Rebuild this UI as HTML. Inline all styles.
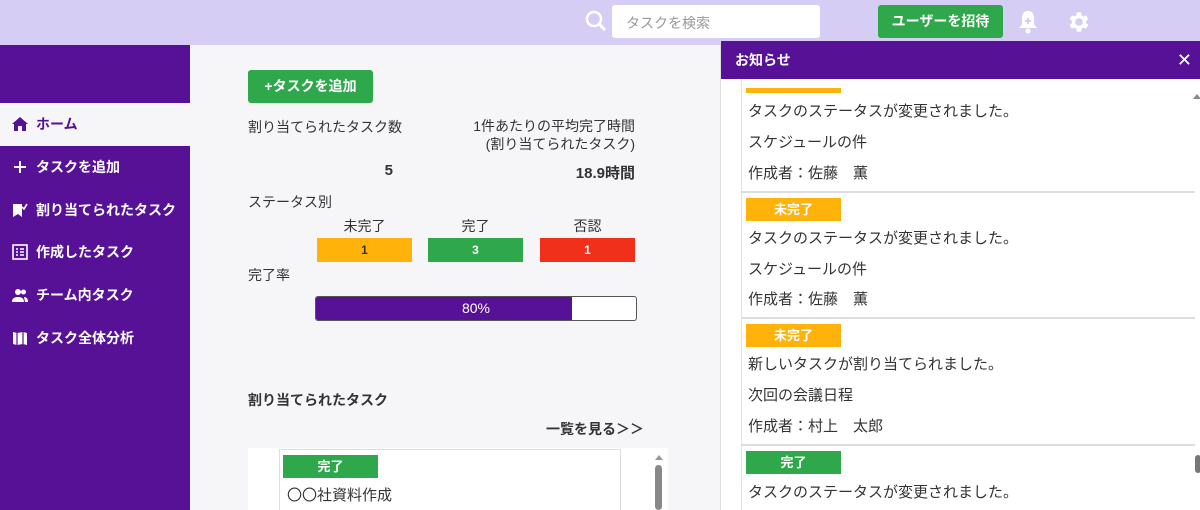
<!DOCTYPE html>
<html><head><meta charset="utf-8"><style>
*{margin:0;padding:0;box-sizing:border-box}
body{width:1200px;height:510px;overflow:hidden;position:relative;background:#f6f6f8;font-family:"Liberation Sans","Noto Sans CJK JP",sans-serif;color:#333}
.a{position:absolute}
.hdr{left:0;top:0;width:1200px;height:45px;background:#d6cdf5}
.side{left:0;top:45px;width:190px;height:465px;background:#561196}
.mi{position:absolute;left:12px;color:#fff;font-weight:bold;font-size:14px;display:flex;align-items:center;gap:8px;height:20px}
.mi svg{width:16px;height:16px}
.b{font-weight:bold}
.t14{font-size:14px}
.box{height:24px;font-size:12px;font-weight:bold;text-align:center;line-height:24px}
.badge{position:absolute;left:25px;width:95px;height:23px;color:#fff;font-weight:bold;font-size:13px;text-align:center;line-height:23px}
.nt{position:absolute;left:27px;font-size:15px;color:#333}
.sep{position:absolute;left:20px;width:454px;height:2px;background:#ddd}
</style></head><body>
<div class="a hdr"></div>
<svg class="a" style="left:584px;top:9px" width="24" height="24" viewBox="0 0 24 24"><circle cx="10" cy="10" r="7" fill="none" stroke="#fff" stroke-width="2.5"/><path d="M15 15l6 6" stroke="#fff" stroke-width="3"/></svg>
<div class="a" style="left:612px;top:5px;width:208px;height:33px;background:#fff;border-radius:3px;font-size:14px;color:#999;padding:8px 0 0 14px">タスクを検索</div>
<div class="a" style="left:878px;top:5px;width:125px;height:33px;background:#2ea84b;border-radius:3px;color:#fff;font-weight:bold;font-size:14px;text-align:center;line-height:33px">ユーザーを招待</div>
<svg class="a" style="left:1016px;top:9px" width="24" height="26" viewBox="0 0 24 26"><path d="M12 2c-4 0-6 3-6 7v6l-3 4h18l-3-4V9c0-4-2-7-6-7z" fill="#fff"/><circle cx="12" cy="22" r="2.5" fill="#fff"/><path d="M12 9v6M9 12h6" stroke="#d6cdf5" stroke-width="2"/></svg>
<svg class="a" style="left:1065px;top:9px" width="26" height="26" viewBox="0 0 24 24"><path fill="#fff" d="M19.4 13a7.5 7.5 0 000-2l2.1-1.6-2-3.5-2.5 1a7 7 0 00-1.7-1L14.9 3h-4l-.4 2.9a7 7 0 00-1.7 1l-2.5-1-2 3.5L6.4 11a7.5 7.5 0 000 2l-2.1 1.6 2 3.5 2.5-1a7 7 0 001.7 1l.4 2.9h4l.4-2.9a7 7 0 001.7-1l2.5 1 2-3.5zM12.9 15.5a3.5 3.5 0 110-7 3.5 3.5 0 010 7z"/></svg>

<div class="a side"></div>
<div class="a" style="left:0;top:103px;width:190px;height:43px;background:#f6f6f8"></div>
<div class="mi" style="top:114px;color:#561196"><svg viewBox="0 0 16 16"><path d="M8 1L0 8h2v7h4v-5h4v5h4V8h2z" fill="#561196"/></svg>ホーム</div>
<div class="mi" style="top:157px"><svg viewBox="0 0 16 16"><path d="M8 2v12M2 8h12" stroke="#fff" stroke-width="2"/></svg>タスクを追加</div>
<div class="mi" style="top:200px"><svg viewBox="0 0 16 16"><path d="M1 2h9v13l-4-3-5 3z" fill="#fff"/><path d="M10 5l2 2 3-5" stroke="#fff" stroke-width="1.6" fill="none"/></svg>割り当てられたタスク</div>
<div class="mi" style="top:242px"><svg viewBox="0 0 16 16"><rect x="1" y="1" width="14" height="14" fill="none" stroke="#fff" stroke-width="1.6"/><path d="M4 5h2M8 5h4M4 8h2M8 8h4M4 11h2M8 11h4" stroke="#fff" stroke-width="1.5"/></svg>作成したタスク</div>
<div class="mi" style="top:285px"><svg viewBox="0 0 16 16"><circle cx="6" cy="5" r="3" fill="#fff"/><circle cx="11.5" cy="5" r="2.5" fill="#fff"/><path d="M0 15c0-4 3-5 6-5s6 1 6 5zM12 10c2 0 4 1 4 5h-3z" fill="#fff"/></svg>チーム内タスク</div>
<div class="mi" style="top:328px"><svg viewBox="0 0 16 16"><path d="M1 2l4 1 6-1 4 1v12l-4-1-6 1-4-1z" fill="#fff"/><path d="M5 3v12M11 2v12" stroke="#561196" stroke-width="1.2"/></svg>タスク全体分析</div>

<div class="a" style="left:248px;top:70px;width:125px;height:33px;background:#2ea84b;border-radius:3px;color:#fff;font-weight:bold;font-size:14px;text-align:center;line-height:33px">+タスクを追加</div>
<div class="a t14" style="left:248px;top:117px">割り当てられたタスク数</div>
<div class="a t14" style="left:430px;top:117px;width:205px;text-align:right;line-height:18px">1件あたりの平均完了時間<br>(割り当てられたタスク)</div>
<div class="a b" style="left:300px;top:162px;width:93px;text-align:right;font-size:15px">5</div>
<div class="a b" style="left:450px;top:162px;width:185px;text-align:right;font-size:15px">18.9時間</div>
<div class="a t14" style="left:248px;top:192px">ステータス別</div>
<div class="a t14" style="left:317px;top:216px;width:95px;text-align:center">未完了</div>
<div class="a t14" style="left:428px;top:216px;width:95px;text-align:center">完了</div>
<div class="a t14" style="left:540px;top:216px;width:95px;text-align:center">否認</div>
<div class="a box" style="left:317px;top:238px;width:95px;background:#ffb30a">1</div>
<div class="a box" style="left:428px;top:238px;width:95px;background:#2ea84b;color:#fff">3</div>
<div class="a box" style="left:540px;top:238px;width:95px;background:#f0301a;color:#fff">1</div>
<div class="a t14" style="left:248px;top:265px">完了率</div>
<div class="a" style="left:315px;top:296px;width:322px;height:25px;border:1px solid #555;border-radius:3px;background:#fff;overflow:hidden"><div style="width:256px;height:100%;background:#561196;color:#fff;font-size:14px;text-align:center;line-height:23px;padding-left:64px">80%</div></div>
<div class="a b t14" style="left:248px;top:390px">割り当てられたタスク</div>
<div class="a b t14" style="left:520px;top:419px;width:124px;text-align:right">一覧を見る＞＞</div>
<div class="a" style="left:248px;top:448px;width:420px;height:62px;background:#fff"></div>
<div class="a" style="left:279px;top:449px;width:342px;height:61px;border:1px solid #ddd;border-bottom:none"></div>
<div class="a" style="left:283px;top:455px;width:95px;height:23px;background:#2ea84b;color:#fff;font-weight:bold;font-size:13px;text-align:center;line-height:23px">完了</div>
<div class="a" style="left:287px;top:484px;font-size:15px">〇〇社資料作成</div>
<div class="a" style="left:655px;top:455px;border:4px solid transparent;border-bottom:5px solid #999;border-top:none"></div>
<div class="a" style="left:655px;top:465px;width:7px;height:45px;background:#888;border-radius:4px"></div>

<div class="a" style="left:720px;top:41px;width:480px;height:469px;background:#fff;border-left:1px solid #ddd">
 <div style="height:38px;background:#561196;color:#fff;font-weight:bold;font-size:14px;line-height:38px;padding-left:14px;position:relative">お知らせ<span style="position:absolute;right:8px;top:0;font-weight:normal;font-size:18px">✕</span></div>
 <div style="position:absolute;left:20px;top:38px;width:1px;height:431px;background:#e2e2e2"></div>
 <div class="a" style="left:25px;top:47px;width:95px;height:5px;background:#ffb30a"></div>
 <div class="nt" style="top:59px">タスクのステータスが変更されました。</div>
 <div class="nt" style="top:90px">スケジュールの件</div>
 <div class="nt" style="top:121px">作成者：佐藤　薫</div>
 <div class="sep" style="top:150px"></div>
 <div class="badge" style="top:157px;background:#ffb30a">未完了</div>
 <div class="nt" style="top:186px">タスクのステータスが変更されました。</div>
 <div class="nt" style="top:217px">スケジュールの件</div>
 <div class="nt" style="top:247px">作成者：佐藤　薫</div>
 <div class="sep" style="top:276px"></div>
 <div class="badge" style="top:283px;background:#ffb30a">未完了</div>
 <div class="nt" style="top:312px">新しいタスクが割り当てられました。</div>
 <div class="nt" style="top:343px">次回の会議日程</div>
 <div class="nt" style="top:374px">作成者：村上　太郎</div>
 <div class="sep" style="top:403px"></div>
 <div class="badge" style="top:410px;background:#2ea84b">完了</div>
 <div class="nt" style="top:440px">タスクのステータスが変更されました。</div>
 <div class="a" style="left:472px;top:53px;border:4px solid transparent;border-bottom:5px solid #888;border-top:none"></div>
 <div class="a" style="left:474px;top:414px;width:6px;height:18px;background:#777;border-radius:3px"></div>
</div>
</body></html>
